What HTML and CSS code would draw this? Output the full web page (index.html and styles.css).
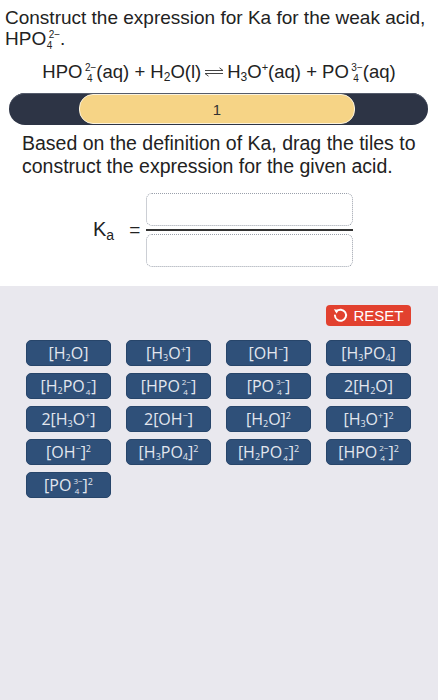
FILE: index.html
```html
<!DOCTYPE html>
<html>
<head>
<meta charset="utf-8">
<link rel="stylesheet" href="styles.css">
</head>
<body>
<div class="top">
  <div class="title">Construct the expression for Ka for the weak acid,<br>HPO<span class="ss"><span class="sp">2−</span><span class="sb">4</span></span>.</div>
  <div class="equation">HPO<span class="ss"><span class="sp">2−</span><span class="sb">4</span></span>(aq) + H<span class="sb1">2</span>O(l)<svg class="eq-arrow" width="20" height="10" viewBox="0 0 20 10"><path d="M1 3.5 H19 L15.5 0.8" fill="none" stroke="#444" stroke-width="1"/><path d="M19 6.5 H1 L4.5 9.2" fill="none" stroke="#444" stroke-width="1"/></svg>H<span class="sb1">3</span>O<span class="sp1">+</span>(aq) + PO<span class="ss"><span class="sp">3−</span><span class="sb">4</span></span>(aq)</div>
  <div class="bar"><div class="pill">1</div></div>
  <div class="instr">Based on the definition of Ka, drag the tiles to<br>construct the expression for the given acid.</div>
  <div class="fraction">
    <div class="ka">K<span class="ka-sub">a</span></div>
    <div class="equals">=</div>
    <div class="frac">
      <div class="slot"></div>
      <div class="rule"></div>
      <div class="slot"></div>
    </div>
  </div>
</div>
<div class="bottom">
  <div class="reset-row">
    <div class="reset"><svg class="reset-icon" width="15" height="15" viewBox="0 0 14 14"><path d="M3.2 3.2 A5.2 5.2 0 1 1 1.8 7" fill="none" stroke="#fff" stroke-width="1.8" stroke-linecap="round"/><path d="M0.8 1.2 L4.8 1.6 L3.6 5.4 Z" fill="#fff"/></svg>RESET</div>
  </div>
  <div class="tiles">
    <div class="tile">[H<span class="tb">2</span>O]</div>
    <div class="tile">[H<span class="tb">3</span>O<span class="tp">+</span>]</div>
    <div class="tile">[OH<span class="tp">−</span>]</div>
    <div class="tile">[H<span class="tb">3</span>PO<span class="tb">4</span>]</div>
    <div class="tile">[H<span class="tb">2</span>PO<span class="ts"><span class="tsp">−</span><span class="tsb">4</span></span>]</div>
    <div class="tile">[HPO<span class="ts"><span class="tsp">2−</span><span class="tsb">4</span></span>]</div>
    <div class="tile">[PO<span class="ts"><span class="tsp">3−</span><span class="tsb">4</span></span>]</div>
    <div class="tile">2[H<span class="tb">2</span>O]</div>
    <div class="tile">2[H<span class="tb">3</span>O<span class="tp">+</span>]</div>
    <div class="tile">2[OH<span class="tp">−</span>]</div>
    <div class="tile">[H<span class="tb">2</span>O]<span class="tp">2</span></div>
    <div class="tile">[H<span class="tb">3</span>O<span class="tp">+</span>]<span class="tp">2</span></div>
    <div class="tile">[OH<span class="tp">−</span>]<span class="tp">2</span></div>
    <div class="tile">[H<span class="tb">3</span>PO<span class="tb">4</span>]<span class="tp">2</span></div>
    <div class="tile">[H<span class="tb">2</span>PO<span class="ts"><span class="tsp">−</span><span class="tsb">4</span></span>]<span class="tp">2</span></div>
    <div class="tile">[HPO<span class="ts"><span class="tsp">2−</span><span class="tsb">4</span></span>]<span class="tp">2</span></div>
    <div class="tile">[PO<span class="ts"><span class="tsp">3−</span><span class="tsb">4</span></span>]<span class="tp">2</span></div>
  </div>
</div>
</body>
</html>
```
FILE: styles.css
```css
html, body {
  margin: 0;
  padding: 0;
}
body {
  width: 438px;
  min-height: 700px;
  background: #e9e8ee;
  font-family: "Liberation Sans", Arial, sans-serif;
  color: #222;
  display: flex;
  flex-direction: column;
}
.top {
  background: #fff;
  height: 286px;
  box-sizing: border-box;
  padding-top: 7px;
}
.title {
  font-size: 19px;
  line-height: 21px;
  padding-left: 5px;
  white-space: nowrap;
}
.ss {
  display: inline-block;
  vertical-align: -4px;
  font-size: 10px;
  line-height: 11px;
  margin-left: 0.5px;
}
.sp, .sb { display: block; }
.sp { margin-left: 2px; }
.sb1 {
  font-size: 12px;
  line-height: 0;
  vertical-align: -3px;
}
.sp1 {
  font-size: 11px;
  line-height: 0;
  vertical-align: 7px;
}
.equation {
  font-size: 18.5px;
  line-height: 24px;
  text-align: center;
  margin-top: 9px;
  white-space: nowrap;
}
.eq-arrow {
  margin: 0 3px;
  vertical-align: 1px;
}
.bar {
  margin: 9px 10px 0 9px;
  height: 32px;
  border-radius: 16px;
  background: #2d3445;
  display: flex;
  align-items: center;
  padding-left: 70px;
  box-shadow: inset 0 1px 0 #555c6c;
}
.pill {
  width: 274px;
  height: 28px;
  border-radius: 14px;
  background: #f6d486;
  border: 1.5px solid #fbf3de;
  display: flex;
  align-items: center;
  justify-content: center;
  font-size: 15px;
  color: #333;
}
.instr {
  font-size: 19.5px;
  line-height: 23px;
  padding-left: 22px;
  margin-top: 7px;
  white-space: nowrap;
}
.fraction {
  display: flex;
  align-items: center;
  margin-top: 15px;
  padding-left: 93px;
}
.ka {
  font-size: 20px;
}
.ka-sub {
  font-size: 14px;
  vertical-align: -4px;
}
.equals {
  font-size: 19px;
  margin-left: 15px;
  margin-right: 6px;
}
.frac {
  display: flex;
  flex-direction: column;
  width: 207px;
}
.slot {
  height: 33px;
  box-sizing: border-box;
  border: 1.5px dotted #9aa0ab;
  border-radius: 6px;
}
.rule {
  height: 2px;
  background: #333;
  margin: 3px 0;
}
.bottom {
  flex: 1;
  padding-top: 19px;
}
.reset-row {
  display: flex;
  justify-content: flex-end;
  padding-right: 27px;
}
.reset {
  width: 85px;
  height: 21px;
  box-sizing: border-box;
  background: #e2412f;
  border-radius: 4px;
  color: #fff;
  font-size: 15px;
  display: flex;
  align-items: center;
  justify-content: center;
  gap: 5px;
}
.tiles {
  display: grid;
  grid-template-columns: repeat(4, 85px);
  column-gap: 15px;
  row-gap: 7px;
  padding-left: 26px;
  margin-top: 14px;
}
.tile {
  height: 26px;
  box-sizing: border-box;
  background: #2f5079;
  border: 1px solid #27456a;
  border-radius: 5px;
  color: #e3e7ef;
  font-family: "Open Sans", "Liberation Sans", sans-serif;
  font-size: 16px;
  line-height: 24px;
  text-align: center;
  white-space: nowrap;
}
.tb {
  font-size: 9px;
  line-height: 0;
  vertical-align: -2px;
}
.tp {
  font-size: 9px;
  line-height: 0;
  vertical-align: 6px;
}
.ts {
  display: inline-block;
  vertical-align: -3px;
  font-size: 8px;
  line-height: 10px;
}
.tsp, .tsb { display: block; }
.tsp { margin-left: 2px; }
```
